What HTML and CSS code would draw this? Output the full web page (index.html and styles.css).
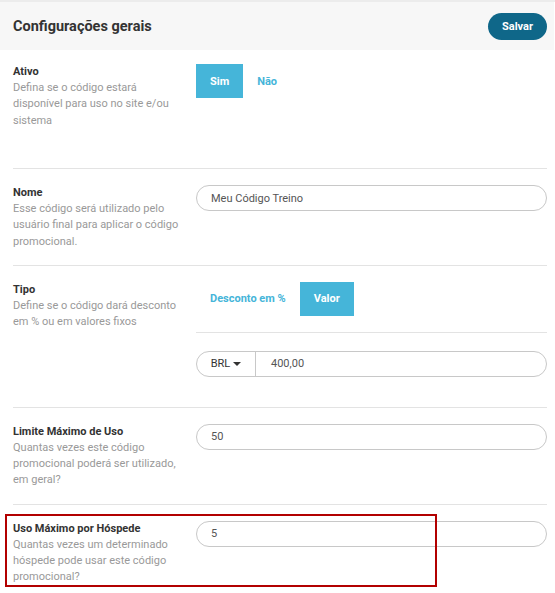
FILE: index.html
```html
<!DOCTYPE html>
<html lang="pt-BR">
<head>
<meta charset="utf-8">
<title>Configurações gerais</title>
<link rel="stylesheet" href="styles.css">
</head>
<body>
<div class="page">
  <header class="top">
    <h1 class="title">Configurações gerais</h1>
    <button class="btn-save" type="button">Salvar</button>
  </header>

  <div class="form">
    <section class="row row-tall">
      <div class="info">
        <h2 class="label">Ativo</h2>
        <p class="desc">Defina se o código estará disponível para uso no site e/ou sistema</p>
      </div>
      <div class="ctrl">
        <div class="toggle">
          <span class="opt active">Sim</span>
          <span class="opt">Não</span>
        </div>
      </div>
    </section>

    <section class="row">
      <div class="info">
        <h2 class="label">Nome</h2>
        <p class="desc">Esse código será utilizado pelo usuário final para aplicar o código promocional.</p>
      </div>
      <div class="ctrl">
        <div class="field">Meu Código Treino</div>
      </div>
    </section>

    <section class="row row-tipo">
      <div class="info">
        <h2 class="label">Tipo</h2>
        <p class="desc">Define se o código dará desconto em % ou em valores fixos</p>
      </div>
      <div class="ctrl">
        <div class="toggle toggle-split">
          <span class="opt">Desconto em %</span>
          <span class="opt active">Valor</span>
        </div>
        <div class="field group">
          <span class="addon">BRL <span class="caret"></span></span>
          <span class="group-value">400,00</span>
        </div>
      </div>
    </section>

    <section class="row">
      <div class="info">
        <h2 class="label">Limite Máximo de Uso</h2>
        <p class="desc">Quantas vezes este código promocional poderá ser utilizado, em geral?</p>
      </div>
      <div class="ctrl">
        <div class="field">50</div>
      </div>
    </section>

    <section class="row row-last">
      <div class="info">
        <h2 class="label">Uso Máximo por Hóspede</h2>
        <p class="desc">Quantas vezes um determinado hóspede pode usar este código promocional?</p>
      </div>
      <div class="ctrl">
        <div class="field">5</div>
      </div>
      <div class="highlight"></div>
    </section>
  </div>
</div>
</body>
</html>
```

FILE: styles.css
```css
* { box-sizing: border-box; }

html, body {
  margin: 0;
  padding: 0;
  background: #fff;
}

body {
  font-family: Roboto, "Liberation Sans", Arial, sans-serif;
  color: #333;
  font-size: 11px;
}

.page {
  width: 555px;
  border-top: 2px solid #ececec;
}

.top {
  display: flex;
  align-items: center;
  justify-content: space-between;
  height: 48px;
  margin-right: 1px;
  padding: 0 7px 0 13px;
  background: #f7f7f7;
}

.title {
  margin: 0;
  font-size: 14.5px;
  font-weight: 700;
  color: #333;
}

.btn-save {
  height: 27px;
  width: 59px;
  border: 0;
  border-radius: 14px;
  background: #0f6789;
  color: #fff;
  font-family: inherit;
  font-size: 11px;
  font-weight: 700;
  padding: 0;
}

.form {
  margin: 0 8px 0 13px;
}

.row {
  position: relative;
  display: grid;
  grid-template-columns: 183px 1fr;
  padding: 16px 0 15px;
  border-bottom: 1px solid #e3e3e3;
}

.row-tall {
  padding-top: 14px;
  min-height: 119px;
}

.row-last {
  border-bottom: 0;
}

.info {
  width: 174px;
}

.label {
  margin: 0;
  font-size: 11px;
  font-weight: 700;
  line-height: 16px;
  color: #333;
}

.desc {
  margin: 0;
  font-size: 11px;
  line-height: 16.3px;
  color: #999;
}

.toggle {
  display: flex;
}

.opt {
  display: flex;
  align-items: center;
  height: 34px;
  padding: 0 14px;
  font-weight: 700;
  color: #45b5d9;
}

.opt.active {
  background: #45b5d9;
  color: #fff;
}

.toggle-split {
  padding-bottom: 16px;
  border-bottom: 1px solid #e3e3e3;
  margin-bottom: 18px;
}

.row-tipo {
  padding-bottom: 30px;
}

.field {
  display: flex;
  align-items: center;
  height: 26px;
  padding: 0 14px;
  border: 1px solid #c8c8c8;
  border-radius: 13px;
  color: #555;
  font-size: 11px;
}

.field.group {
  padding: 0;
}

.addon {
  display: flex;
  align-items: center;
  justify-content: center;
  gap: 3px;
  width: 59px;
  height: 100%;
  border-right: 1px solid #c8c8c8;
  color: #333;
}

.caret {
  width: 0;
  height: 0;
  border-left: 4px solid transparent;
  border-right: 4px solid transparent;
  border-top: 4px solid #333;
}

.group-value {
  padding-left: 15px;
}

.highlight {
  position: absolute;
  left: -8px;
  top: 9px;
  width: 432px;
  height: 73px;
  border: 2px solid #b20000;
  pointer-events: none;
}
```
